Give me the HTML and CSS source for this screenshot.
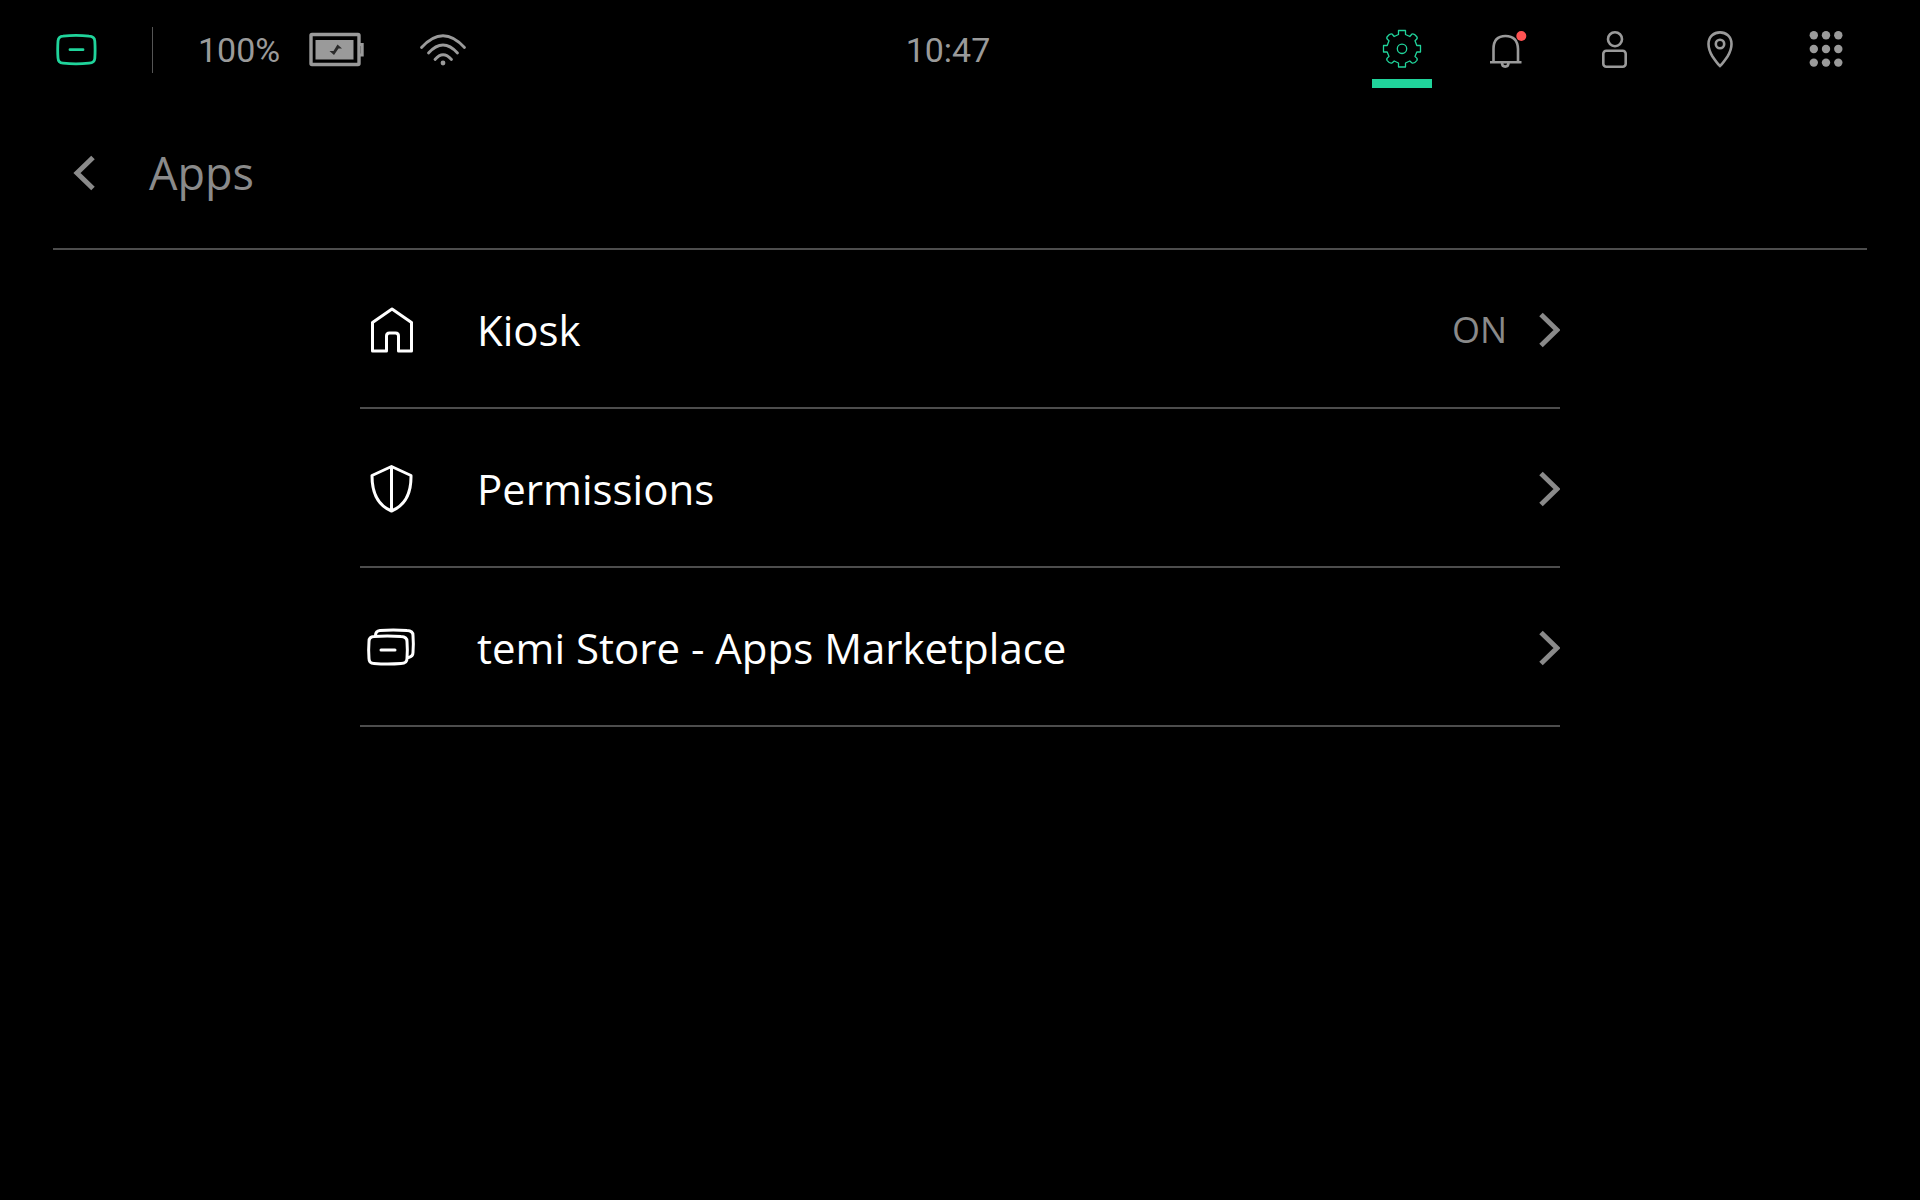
FILE: index.html
```html
<!DOCTYPE html>
<html lang="en">
<head>
<meta charset="utf-8">
<title>Apps</title>
<meta name="viewport" content="width=device-width, initial-scale=1">
<link rel="stylesheet" href="styles.css">
</head>
<body>
<header class="status-bar">
  <div class="status">
    <button class="icon-button" type="button" aria-label="Home">
      <svg class="logo" width="44" height="34" viewBox="0 0 44 34" fill="none" stroke-width="2.8" stroke-linecap="round">
        <path d="M7 3.200Q20 1.600 33 3.200Q38.500 3.500 38.800 8Q39.400 17 38.800 25.500Q38.500 29.800 33 30.200Q20 31.500 7 30.200Q2.200 29.800 2 25Q1.400 17 2 8Q2.500 3.500 7 3.200Z"/>
        <path d="M14 16.700H27"/>
      </svg>
    </button>
    <span class="divider"></span>
    <span class="battery-level">100%</span>
    <svg class="battery" width="56" height="36" viewBox="0 0 56 36" fill="none">
      <rect x="2" y="2.500" width="48" height="30" rx="1" stroke="#9a9a9a" stroke-width="3.400"/>
      <path d="M50 12.500H53.200V23H50" stroke="#9a9a9a" stroke-width="3"/>
      <rect x="6.500" y="8" width="38" height="19.500" fill="#9a9a9a"/>
      <path d="M28.500 12.500L33 16.500H29.500L25 23L20.500 19H24.500Z" fill="#2a2a2a"/>
    </svg>
    <svg class="wifi" width="48" height="34" viewBox="0 0 48 34" fill="none" stroke="#9a9a9a" stroke-width="2.800" stroke-linecap="round">
      <path d="M2.500 14.500Q24-9 45.500 14.500M9.500 20Q24 4 38.500 20M16 26.500Q24 17 32.500 26.500"/>
      <circle cx="24" cy="30" r="2.400" fill="#9a9a9a" stroke="none"/>
    </svg>
  </div>
  <time class="clock">10:47</time>
  <nav class="nav">
    <a class="nav-item active" href="#settings" aria-label="Settings" aria-current="page">
      <svg width="60" height="42" viewBox="0 0 60 42" fill="none" stroke="#20d49b" stroke-width="1.300" stroke-linejoin="round">
        <path d="M26.500 2.500H33.500V6.500L37.800 8.500L40 6Q42 5 45 9Q46 10.500 43 12.700L44.800 17.500H48.500V24H44.800L43 28.500Q46 30.500 45 32.300Q42 36 40 35L37.800 33L33.500 35V39H26.500V35L22.200 33L20 35Q18 36 15 32.300Q14 30.500 17 28.500L15.200 24H11.500V17.500H15.200L17 12.700Q14 10.500 15 9Q18 5 20 6L22.200 8.500L26.500 6.500Z"/>
        <circle cx="30" cy="20.800" r="4.700"/>
      </svg>
    </a>
    <a class="nav-item" href="#notifications" aria-label="Notifications">
      <svg width="60" height="42" viewBox="0 0 60 42" fill="none" stroke="#9a9a9a" stroke-width="2.600">
        <path d="M15.500 34V21Q15.500 8 27.500 8T40 21V34M12 34.200H43.500M24 35Q24 38.600 27.200 38.600T30.500 35"/>
        <circle cx="43.300" cy="8" r="5" fill="#ff5252" stroke="none"/>
      </svg>
    </a>
    <a class="nav-item" href="#profile" aria-label="Profile">
      <svg width="60" height="42" viewBox="0 0 60 42" fill="none" stroke="#9a9a9a" stroke-width="2.600">
        <circle cx="31" cy="11.200" r="7"/>
        <rect x="19.300" y="22.800" width="22.400" height="16" rx="3"/>
      </svg>
    </a>
    <a class="nav-item" href="#locations" aria-label="Locations">
      <svg width="60" height="42" viewBox="0 0 60 42" fill="none" stroke="#9a9a9a" stroke-width="2.600">
        <path d="M30 38Q28 36.500 22.500 28.500Q18.500 22 18.500 16C18.500 0.500 41.500 0.500 41.500 16Q41.500 22 37.500 28.500Q32 36.500 30 38Z"/>
        <circle cx="30" cy="16" r="4.200"/>
      </svg>
    </a>
    <a class="nav-item" href="#apps" aria-label="All apps">
      <svg width="60" height="42" viewBox="0 0 60 42" fill="#9a9a9a">
        <circle cx="17.800" cy="7.200" r="4.200"/><circle cx="30" cy="7.200" r="4.200"/><circle cx="42.300" cy="7.200" r="4.200"/>
        <circle cx="17.800" cy="21" r="4.200"/><circle cx="30" cy="21" r="4.200"/><circle cx="42.300" cy="21" r="4.200"/>
        <circle cx="17.800" cy="34.600" r="4.200"/><circle cx="30" cy="34.600" r="4.200"/><circle cx="42.300" cy="34.600" r="4.200"/>
      </svg>
    </a>
  </nav>
</header>
<main>
  <div class="page-header">
    <button class="icon-button" type="button" aria-label="Back">
      <svg width="24" height="36" viewBox="0 0 24 36" fill="none" stroke="#8a8a8a" stroke-width="5">
        <path d="M20 2.500L4 18L20 33.500"/>
      </svg>
    </button>
    <h1 class="page-title">Apps</h1>
  </div>
  <ul class="settings">
    <li>
      <a class="row" href="#kiosk">
        <svg class="row-icon" width="50" height="50" viewBox="0 0 50 50" fill="none" stroke="#fff" stroke-width="3" stroke-linejoin="round">
          <path d="M12.500 17.500L32 4L51.500 17.500V46H38.500V31Q38.500 28 35.500 28H29.500Q26.500 28 26.500 31V46H12.500Z"/>
        </svg>
        <span class="row-label">Kiosk</span>
        <span class="row-value">ON</span>
        <svg width="24" height="36" viewBox="0 0 24 36" fill="none" stroke="#8a8a8a" stroke-width="5"><path d="M5 2.500L21 18L5 33.500"/></svg>
      </a>
    </li>
    <li>
      <a class="row" href="#permissions">
        <svg class="row-icon" width="50" height="50" viewBox="0 0 50 50" fill="none" stroke="#fff" stroke-width="3" stroke-linejoin="round">
          <path d="M31.500 2.500L51 11.500Q51.500 39 31.500 47Q12 39 12 11.500ZM31.500 2.500V47"/>
        </svg>
        <span class="row-label">Permissions</span>
        <svg width="24" height="36" viewBox="0 0 24 36" fill="none" stroke="#8a8a8a" stroke-width="5"><path d="M5 2.500L21 18L5 33.500"/></svg>
      </a>
    </li>
    <li>
      <a class="row" href="#store">
        <svg class="row-icon" width="50" height="50" viewBox="0 0 50 50" fill="none" stroke="#fff" stroke-width="3" stroke-linecap="round">
          <path d="M14 13.500Q27 12.500 41 13.500Q47 13.500 47 18.500Q47.700 27 47 35.500Q47 40.500 41 40.500Q28 41.500 14 40.500Q9 40.500 9 35.500Q8.300 27 9 18.500Q9 13.500 14 13.500ZM21 27H35"/>
          <path d="M15.500 12.500Q15.500 8 20 7.500Q33 6.500 47 7.500Q53 7.500 53 12.500Q53.700 21 53 29.500Q53 33.500 48.500 34.500"/>
        </svg>
        <span class="row-label">temi Store - Apps Marketplace</span>
        <svg width="24" height="36" viewBox="0 0 24 36" fill="none" stroke="#8a8a8a" stroke-width="5"><path d="M5 2.500L21 18L5 33.500"/></svg>
      </a>
    </li>
  </ul>
</main>
</body>
</html>
```
FILE: styles.css
```css
* {
  box-sizing: border-box;
}

body {
  margin: 0;
  background: #000;
  color: #fff;
  font-family: "Open Sans", "Noto Sans", sans-serif;
}

svg {
  display: block;
  flex: none;
}

a {
  color: inherit;
  text-decoration: none;
}

.icon-button {
  padding: 0;
  border: 0;
  background: none;
  cursor: pointer;
}

.status-bar {
  display: grid;
  grid-template-columns: 1fr auto 1fr;
  align-items: center;
  height: 98px;
  padding: 0 64px 0 40px;
  color: #9a9a9a;
  font: 34px/40px Roboto, sans-serif;
}

.status,
.clock {
  padding-top: 2px;
}

.status {
  display: flex;
  align-items: center;
  padding-left: 16px;
}

.logo {
  stroke: #20d49b;
}

.divider {
  width: 1px;
  height: 46px;
  margin: 0 45px 0 52px;
  background: #555;
}

.battery {
  margin: 0 54px 0 29px;
}

.nav {
  display: flex;
  justify-content: flex-end;
  gap: 46px;
}

.nav-item {
  width: 60px;
  height: 98px;
  padding-top: 28px;
}

.nav-item.active {
  background: linear-gradient(#20d49b, #20d49b) 0 79px / 60px 9px no-repeat;
}

.page-header {
  display: flex;
  align-items: center;
  gap: 52px;
  height: 152px;
  margin: 0 53px;
  padding: 0 20px;
  border-bottom: 2px solid #4d4d4d;
}

.page-title {
  margin: 0;
  color: #8a8a8a;
  font-size: 45px;
  font-weight: 400;
  line-height: 60px;
}

.settings {
  width: 62.5%;
  margin: 0 auto;
  padding: 0;
  list-style: none;
}

.row {
  display: flex;
  align-items: center;
  height: 159px;
  padding-top: 3px;
  border-bottom: 2px solid #4d4d4d;
}

.row-icon {
  margin-right: 67px;
  overflow: visible;
}

.row-label {
  flex: 1;
  font-size: 42px;
  line-height: 56px;
}

.row-value {
  margin-right: 29px;
  color: #8a8a8a;
  font-size: 36px;
  line-height: 48px;
}
```
